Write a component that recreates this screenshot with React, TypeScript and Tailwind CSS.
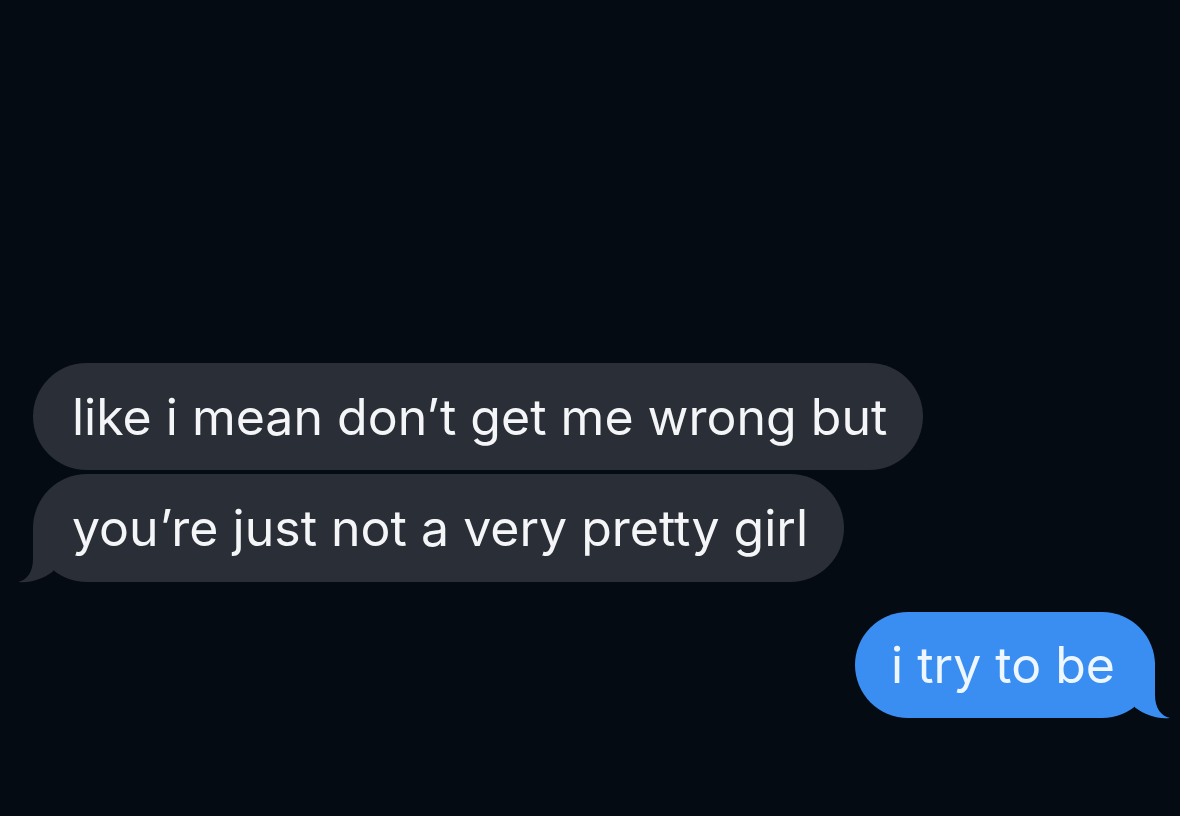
const Tail = ({side, color}: {side: 'left' | 'right'; color: string}) => (
    <svg
        width="44"
        height="57"
        viewBox="0 0 44 57"
        className={`absolute -bottom-[1px] ${side === 'left' ? '-left-[15px]' : '-right-[15px] -scale-x-100'}`}>
        <path d="M15 0 L15 33 C15 46 9 54 0 56 C12 57.5 25 53 35 45.5 L43 0 Z" fill={color} />
    </svg>
);

export default function App() {
    return (
        <main
            className="w-[1180px] h-[816px] bg-[#050b13] flex flex-col pt-[363px]"
            style={{fontFamily: 'Inter, "Liberation Sans", sans-serif'}}>
            <div className="flex flex-col gap-[4px] pl-[33px]">
                <div className="self-start h-[107px] flex items-center rounded-full bg-[#2a2e36] pl-[39px] pr-[36px]">
                    <span className="text-[50px] leading-none text-[#f4f5f7]">
                        like i mean don’t get me wrong but
                    </span>
                </div>
                <div className="relative self-start h-[108px] flex items-center rounded-full bg-[#2a2e36] pl-[39px] pr-[36px]">
                    <Tail side="left" color="#2a2e36" />
                    <span className="relative text-[50px] leading-none text-[#f4f5f7]">
                        you’re just not a very pretty girl
                    </span>
                </div>
            </div>
            <div className="flex justify-end pr-[25px] mt-[30px]">
                <div className="relative h-[106px] flex items-center rounded-full bg-[#3a8ef2] pl-[36px] pr-[40px]">
                    <Tail side="right" color="#3a8ef2" />
                    <span className="relative text-[50px] leading-none text-[#eef7ff]">i try to be</span>
                </div>
            </div>
        </main>
    );
}
